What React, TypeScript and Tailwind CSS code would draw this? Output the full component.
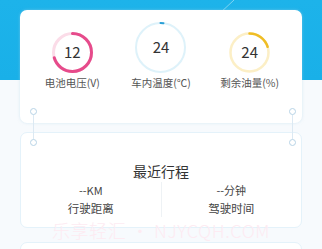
import React from "react";

function Ring({ size, r, sw, track, color, pct, children }: { size: number; r: number; sw: number; track: string; color: string; pct: number; children: React.ReactNode }) {
  const c = 2 * Math.PI * r;
  return (
    <div className="relative flex items-center justify-center" style={{ width: size, height: size }}>
      <svg width={size} height={size} className="absolute inset-0" viewBox={`0 0 ${size} ${size}`}>
        <circle cx={size / 2} cy={size / 2} r={r} fill="none" stroke={track} strokeWidth={sw} />
        <circle
          cx={size / 2}
          cy={size / 2}
          r={r}
          fill="none"
          stroke={color}
          strokeWidth={sw}
          strokeLinecap="round"
          strokeDasharray={`${c * pct} ${c}`}
          transform={`rotate(-90 ${size / 2} ${size / 2})`}
        />
      </svg>
      <span className="relative text-[15px] text-[#333]">{children}</span>
    </div>
  );
}

function Pin() {
  return (
    <div className="flex flex-col items-center w-[8px]">
      <div className="w-[7px] h-[7px] rounded-full border-[1.5px] border-[#b7d3e6] bg-white" />
      <div className="w-px h-[24px] bg-[#dce9f3]" />
      <div className="w-[7px] h-[7px] rounded-full border-[1.5px] border-[#b7d3e6] bg-white" />
    </div>
  );
}

export default function App() {
  return (
    <div
      className="relative w-[322px] h-[249px] overflow-hidden bg-[linear-gradient(to_bottom,#1db3ea_0px,#19b0e8_80px,#f7fafd_80px,#f7fafd_100%)]"
      style={{ fontFamily: '"Noto Sans CJK SC", "Noto Sans", sans-serif' }}
    >
      <svg className="absolute left-0 top-0" width="322" height="20">
        <line x1="219" y1="14" x2="234" y2="0" stroke="#7fd3f2" strokeWidth="1" />
      </svg>
      <div className="relative flex flex-col px-[20px] pt-[10px]">
        <div className="h-[113px] rounded-[7px] bg-white shadow-[0_0_3px_rgba(180,215,235,0.5)] grid grid-cols-3 px-[8px]">
          <div className="flex flex-col items-center pt-[22px]">
            <Ring size={41} r={19} sw={3} track="#fbdce8" color="#e64b8b" pct={0.7}>12</Ring>
            <span className="mt-[3px] text-[10.5px] leading-[14px] text-[#555]">电池电压(V)</span>
          </div>
          <div className="flex flex-col items-center pt-[12px]">
            <Ring size={51} r={24.5} sw={2} track="#def2fa" color="#2a9fd6" pct={0.02}>24</Ring>
            <span className="mt-[3px] text-[10.5px] leading-[14px] text-[#555]">车内温度(℃)</span>
          </div>
          <div className="flex flex-col items-center pt-[22px]">
            <Ring size={41} r={19} sw={2.5} track="#fcefc6" color="#efbd25" pct={0.2}>24</Ring>
            <span className="mt-[3px] text-[10.5px] leading-[14px] text-[#555]">剩余油量(%)</span>
          </div>
        </div>
        <div className="mt-[9px] h-[96px] rounded-[7px] bg-white border border-[#e4f2fa] flex flex-col items-center">
          <div className="mt-[29px] text-[14px] leading-[18px] text-[#333]">最近行程</div>
          <div className="flex w-full mt-[2px]">
            <div className="flex-1 flex flex-col items-center">
              <span className="text-[11px] leading-[16px] text-[#444]">--KM</span>
              <span className="mt-[3px] text-[11.5px] leading-[14px] text-[#444]">行驶距离</span>
            </div>
            <div className="w-px h-[35px] bg-[#eef2f5]" />
            <div className="flex-1 flex flex-col items-center">
              <span className="text-[11px] leading-[16px] text-[#444]">--分钟</span>
              <span className="mt-[3px] text-[11.5px] leading-[14px] text-[#444]">驾驶时间</span>
            </div>
          </div>
        </div>
        <div className="mt-[14px] h-[40px] rounded-[7px] bg-white border border-[#e4f2fa]" />
        <div className="absolute left-[29px] top-[108px]"><Pin /></div>
        <div className="absolute left-[288px] top-[108px]"><Pin /></div>
      </div>
      <div className="absolute left-0 right-0 top-[222px] text-center text-[18px] leading-[16px] font-light text-[#fdebf2] tracking-[0.6px]">
        乐享轻汇 • NJYCQH.COM
      </div>
    </div>
  );
}
